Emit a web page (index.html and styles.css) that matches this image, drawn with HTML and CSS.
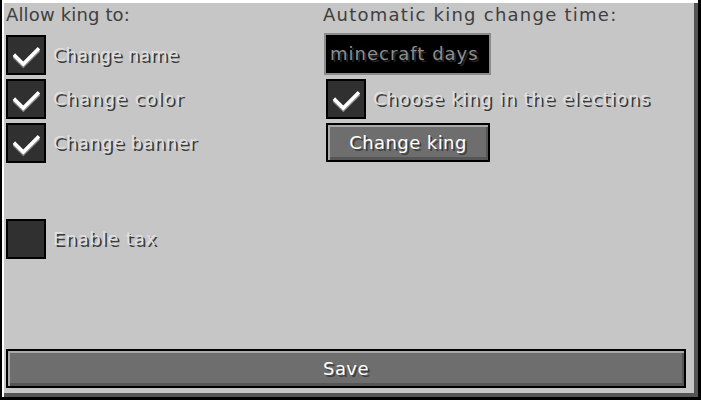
FILE: index.html
```html
<!DOCTYPE html>
<html>
<head>
<meta charset="utf-8">
<link rel="stylesheet" href="styles.css">
</head>
<body>
<div class="panel">
  <div class="columns">
    <div class="col col-left">
      <div class="heading ls-1">Allow king to:</div>
      <div class="rows">
        <div class="row">
          <div class="box checked"><svg viewBox="0 0 40 40" width="36" height="36"><polyline class="shade" points="8,23 17,32 33,16"/><polyline class="tick" points="8,21 17,30 33,14"/></svg></div>
          <span class="label">Change name</span>
        </div>
        <div class="row">
          <div class="box checked"><svg viewBox="0 0 40 40" width="36" height="36"><polyline class="shade" points="8,23 17,32 33,16"/><polyline class="tick" points="8,21 17,30 33,14"/></svg></div>
          <span class="label ls-10">Change color</span>
        </div>
        <div class="row">
          <div class="box checked"><svg viewBox="0 0 40 40" width="36" height="36"><polyline class="shade" points="8,23 17,32 33,16"/><polyline class="tick" points="8,21 17,30 33,14"/></svg></div>
          <span class="label ls-4">Change banner</span>
        </div>
        <div class="row row-tax">
          <div class="box"></div>
          <span class="label ls-8">Enable tax</span>
        </div>
      </div>
    </div>
    <div class="col col-right">
      <div class="heading ls-12">Automatic king change time:</div>
      <div class="field"><span class="field-text ls-10">minecraft days</span></div>
      <div class="row row-elect">
        <div class="box checked"><svg viewBox="0 0 40 40" width="36" height="36"><polyline class="shade" points="8,23 17,32 33,16"/><polyline class="tick" points="8,21 17,30 33,14"/></svg></div>
        <span class="label ls-8">Choose king in the elections</span>
      </div>
      <div class="button btn-king ls-4">Change king</div>
    </div>
  </div>
  <div class="button btn-save ls-4">Save</div>
</div>
</body>
</html>
```

FILE: styles.css
```css
html, body {
  margin: 0;
  padding: 0;
  background: #000;
}
body {
  width: 701px;
  height: 400px;
  overflow: hidden;
  font-family: "DejaVu Sans", sans-serif;
  font-size: 18px;
}
.panel {
  box-sizing: border-box;
  width: 701px;
  height: 400px;
  background: #c6c6c6;
  border-left: 2px solid #000;
  border-right: 3px solid #000;
  border-bottom: 3px solid #000;
  box-shadow: inset 2px 3px 0 #ffffff, inset -4px -4px 0 #555555;
  padding: 5px 12px 9px 4px;
  display: flex;
  flex-direction: column;
}
.columns {
  display: grid;
  grid-template-columns: 317px 1fr;
}
.heading {
  color: #404040;
  line-height: 20px;
  height: 20px;
  white-space: nowrap;
}
.ls-1 { letter-spacing: 0.15px; }
.ls-4 { letter-spacing: 0.42px; }
.ls-8 { letter-spacing: 0.82px; }
.ls-10 { letter-spacing: 1px; }
.ls-12 { letter-spacing: 1.25px; }
.rows {
  margin-top: 10px;
  display: flex;
  flex-direction: column;
  gap: 4px;
}
.row {
  display: flex;
  align-items: center;
  gap: 7px;
  height: 40px;
}
.row-tax {
  margin-top: 52px;
}
.box {
  box-sizing: border-box;
  width: 40px;
  height: 40px;
  background: #303030;
  border: 2px solid #000;
  flex: none;
  display: flex;
  align-items: center;
  justify-content: center;
}
.box svg {
  display: block;
}
.tick, .shade {
  fill: none;
  stroke-width: 4;
  stroke-linecap: square;
  stroke-linejoin: miter;
}
.tick { stroke: #ffffff; }
.shade { stroke: #8a8a8a; }
.label {
  color: #e0e0e0;
  line-height: 20px;
  text-shadow: 2px 2px 0 #3c3c3c;
  white-space: nowrap;
}
.field {
  box-sizing: border-box;
  margin-top: 8px;
  margin-left: 1px;
  width: 167px;
  height: 42px;
  background: #000;
  border: 2px solid #8b8b8b;
  display: flex;
  align-items: center;
  padding-left: 4px;
}
.field-text {
  color: #8e8e8e;
  line-height: 20px;
  text-shadow: 2px 2px 0 #262626;
  white-space: nowrap;
}
.row-elect {
  margin-top: 4px;
  margin-left: 3px;
}
.button {
  box-sizing: border-box;
  border: 2px solid #000;
  background: #6e6e6e;
  box-shadow: inset 2px 2px 0 #a9a9a9, inset -2px -3px 0 #565656;
  color: #ffffff;
  text-shadow: 2px 2px 0 #3f3f3f;
  display: flex;
  align-items: center;
  justify-content: center;
  line-height: 20px;
  white-space: nowrap;
}
.btn-king {
  margin-top: 4px;
  margin-left: 3px;
  width: 164px;
  height: 39px;
}
.btn-save {
  margin-top: auto;
  margin-left: 0;
  width: 680px;
  height: 39px;
}
```
